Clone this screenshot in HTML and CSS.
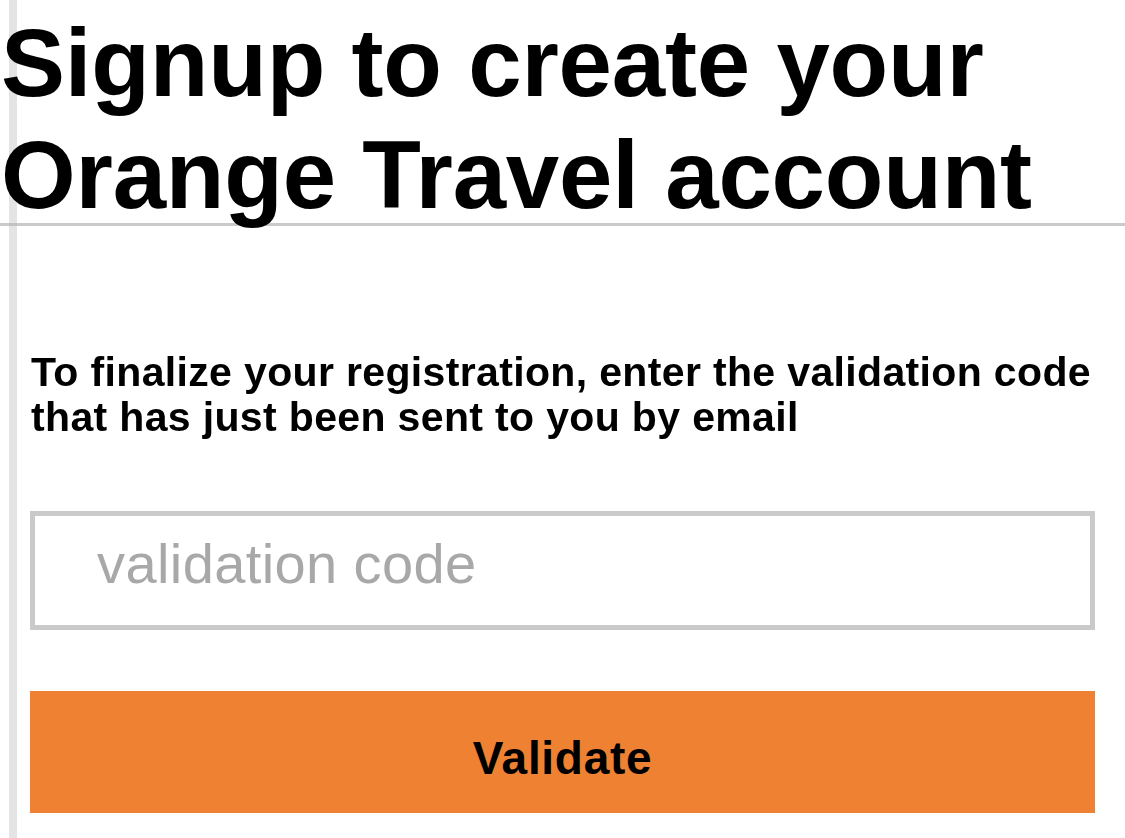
FILE: index.html
```html
<!DOCTYPE html>
<html lang="en">
<head>
<meta charset="utf-8">
<title>Signup - Orange Travel</title>
<link rel="stylesheet" href="styles.css">
</head>
<body>
<div class="rail"></div>
<header class="header">
  <h1 class="title">Signup to create your Orange Travel account</h1>
</header>
<main class="content">
  <p class="intro">To finalize your registration, enter the validation code that has just been sent to you by email</p>
  <form class="form">
    <input class="code-input" type="text" placeholder="validation code">
    <button class="submit" type="button">Validate</button>
  </form>
</main>
</body>
</html>
```
FILE: styles.css
```css
html, body {
  margin: 0;
  padding: 0;
  background: #ffffff;
}
body {
  font-family: "Liberation Sans", Helvetica, Arial, sans-serif;
  color: #000;
  min-height: 838px;
  position: relative;
}
.rail {
  position: fixed;
  left: 9px;
  top: 0;
  bottom: 0;
  width: 8px;
  background: #e4e4e4;
  z-index: 0;
}
.header {
  position: relative;
  z-index: 1;
  height: 223px;
  border-bottom: 3px solid rgba(180, 180, 180, 0.7);
}
.title {
  margin: 0;
  padding: 7px 0 0 1px;
  font-size: 96px;
  line-height: 112px;
  font-weight: 700;
  letter-spacing: -0.2px;
}
.content {
  position: relative;
  z-index: 1;
  padding: 0 30px;
}
.intro {
  margin: 124px 0 0 1px;
  font-size: 41px;
  line-height: 45px;
  font-weight: 700;
  letter-spacing: 0.35px;
}
.form {
  display: flex;
  flex-direction: column;
  margin-top: 71px;
}
.code-input {
  box-sizing: border-box;
  width: 100%;
  height: 119px;
  margin: 0;
  padding: 0 0 14px 62px;
  border: 5px solid #cacaca;
  border-radius: 0;
  background: #fff;
  font-family: inherit;
  font-size: 56px;
  letter-spacing: 0.4px;
  color: #333;
  outline: none;
}
.code-input::placeholder {
  color: #a8a8a8;
  opacity: 1;
}
.submit {
  box-sizing: border-box;
  width: 100%;
  height: 122px;
  margin-top: 61px;
  padding: 12px 0 0 0;
  border: 0;
  border-radius: 0;
  background: #ee8232;
  color: #000;
  font-family: inherit;
  font-size: 46px;
  font-weight: 700;
  letter-spacing: 0.7px;
  cursor: pointer;
}
```
